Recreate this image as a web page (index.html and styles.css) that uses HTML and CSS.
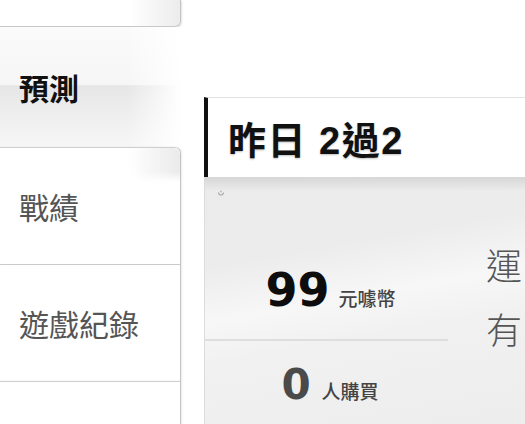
FILE: index.html
```html
<!DOCTYPE html>
<html lang="zh-Hant">
<head>
<meta charset="utf-8">
<title>預測</title>
<link rel="stylesheet" href="styles.css">
</head>
<body>
<div class="layout">
  <nav class="sidebar">
    <div class="nav-item nav-top"></div>
    <div class="nav-item nav-active">預測</div>
    <div class="nav-item nav-first">戰績</div>
    <div class="nav-item">遊戲紀錄</div>
    <div class="nav-item nav-last"></div>
  </nav>
  <main class="main">
    <div class="title-card"><h1 class="title">昨日 2過2</h1></div>
    <section class="stats">
      <svg class="pin" width="8" height="8" viewBox="0 0 8 8"><path d="M1.5 3.5a2.5 2.5 0 0 0 5 0" fill="none" stroke="#aaa" stroke-width="1.2"/><circle cx="4" cy="2.5" r="1" fill="#bbb"/></svg>
      <div class="stat-col">
        <div class="stat stat-price"><span class="num num-big">99</span><span class="unit">元噱幣</span></div>
        <div class="stat stat-buy"><span class="num num-gray">0</span><span class="unit">人購買</span></div>
      </div>
      <div class="desc">
        <p class="desc-line">運</p>
        <p class="desc-line">有</p>
      </div>
    </section>
  </main>
</div>
</body>
</html>
```
FILE: styles.css
```css
html, body {
  margin: 0;
  padding: 0;
  width: 525px;
  height: 424px;
  overflow: hidden;
  background: #fff;
  font-family: "Noto Sans CJK TC", "Noto Sans", sans-serif;
}
.layout {
  display: flex;
  height: 424px;
}
.sidebar {
  width: 181px;
  flex: none;
  display: flex;
  flex-direction: column;
}
.nav-item {
  box-sizing: border-box;
  height: 117px;
  flex: none;
  display: flex;
  align-items: center;
  padding-left: 19px;
  font-size: 30px;
  color: #555;
  background: #fff;
  border-right: 1px solid #c4c4c4;
  border-top: 1px solid #cfcfcf;
  box-shadow: 1px 0 2px rgba(0,0,0,0.08);
}
.nav-top {
  height: 27px;
  border-top: none;
  border-bottom: 1px solid #c8c8c8;
  border-bottom-right-radius: 6px;
  background: linear-gradient(to right, #fff 72%, #ececec 100%);
  box-shadow: 1px 1px 2px rgba(0,0,0,0.12);
}
.nav-active {
  height: 120px;
  border: none;
  box-shadow: none;
  font-weight: 700;
  color: #111;
  background:
    linear-gradient(to right, rgba(255,255,255,0) 70%, #fff 100%),
    linear-gradient(to bottom, #fbfbfb 0%, #f6f6f6 48%, #e6e6e6 49%, #efefef 75%, #f6f6f6 100%);
}
.nav-first {
  border-top-right-radius: 6px;
  position: relative;
}
.nav-first::before {
  content: "";
  position: absolute;
  right: 0;
  top: 0;
  width: 50px;
  height: 34px;
  border-top-right-radius: 6px;
  background: linear-gradient(to right, rgba(236,236,236,0), #eaeaea);
  -webkit-mask-image: linear-gradient(to bottom, #000 0, #000 70%, transparent 100%);
  mask-image: linear-gradient(to bottom, #000 0, #000 70%, transparent 100%);
}
.nav-last {
  height: 60px;
}
.main {
  flex: 1;
  margin-left: 23px;
  padding-top: 97px;
  display: flex;
  flex-direction: column;
}
.title-card {
  box-sizing: border-box;
  height: 80px;
  border-left: 4px solid #111;
  border-top: 1px solid #e2e2e2;
  background: #fff;
  display: flex;
  align-items: center;
  padding-left: 20px;
}
.title {
  margin: 0;
  font-family: "Liberation Sans", "Noto Sans CJK TC", sans-serif;
  font-size: 38px;
  letter-spacing: 1.5px;
  font-weight: 700;
  color: #111;
  text-shadow: 0 1px 2px rgba(0,0,0,0.25);
}
.stats {
  flex: 1;
  position: relative;
  border-left: 1px solid #dcdcdc;
  display: flex;
  background:
    linear-gradient(to bottom, rgba(0,0,0,0.09) 0, rgba(0,0,0,0) 14px),
    linear-gradient(170deg, #ebebeb 0%, #ececec 30%, #f7f7f7 48%, #f1f1f1 62%, #ededed 100%);
}
.pin {
  position: absolute;
  left: 12px;
  top: 12px;
}
.stat-col {
  width: 243px;
  flex: none;
  display: flex;
  flex-direction: column;
}
.stat {
  display: flex;
  align-items: baseline;
  justify-content: center;
  box-sizing: border-box;
}
.stat-price {
  height: 164px;
  padding-top: 90px;
  padding-left: 8px;
  gap: 9px;
  border-bottom: 2px solid #dedede;
}
.stat-buy {
  padding-top: 23px;
  padding-left: 7px;
  gap: 11px;
}
.num {
  font-family: "DejaVu Sans", sans-serif;
  font-weight: 700;
  line-height: 1;
}
.num-big {
  font-size: 46px;
  color: #0d0d0d;
}
.num-gray {
  font-size: 42px;
  color: #4a4a4a;
}
.unit {
  font-size: 19px;
  color: #444;
  font-weight: 500;
}
.desc {
  padding-left: 38px;
  padding-top: 55px;
}
.desc-line {
  margin: 0;
  font-size: 36px;
  line-height: 64px;
  color: #555;
  font-weight: 300;
}
```
